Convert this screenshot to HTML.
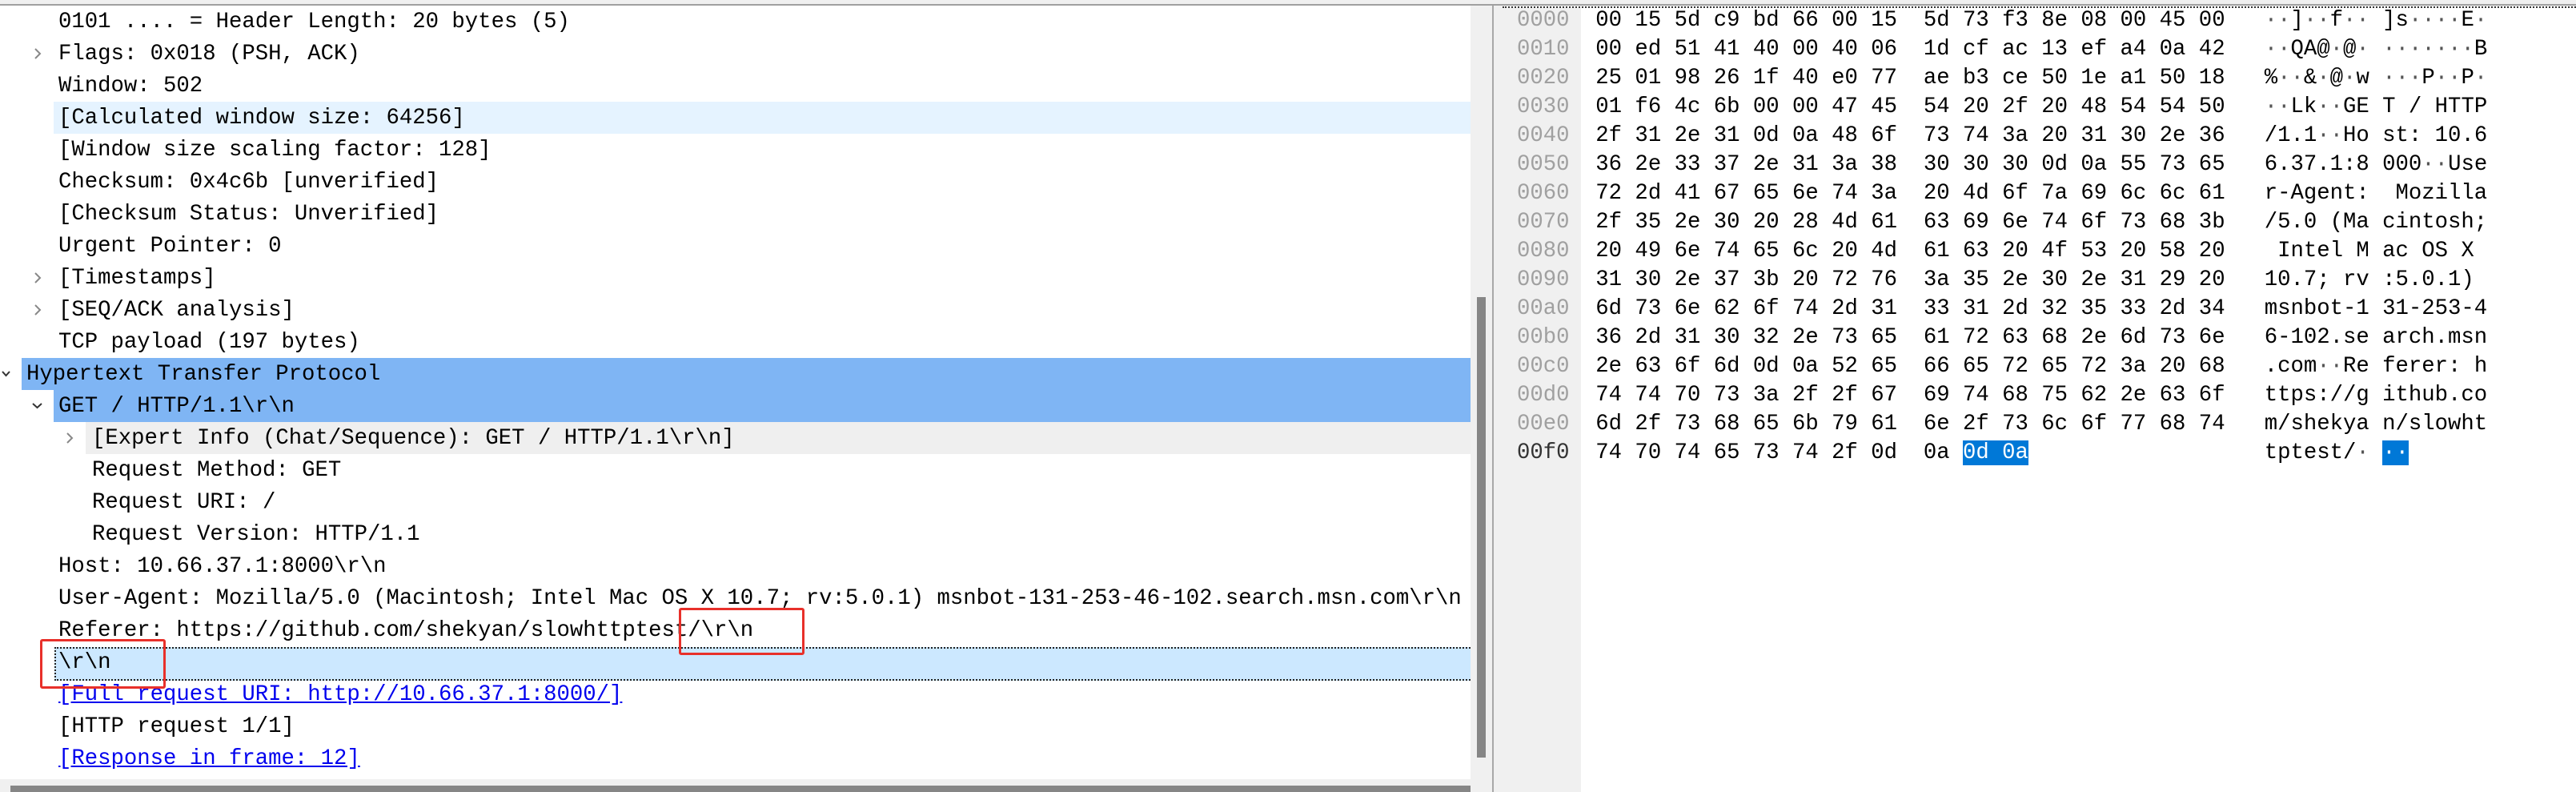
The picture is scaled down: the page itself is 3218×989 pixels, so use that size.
<!DOCTYPE html>
<html><head><meta charset="utf-8"><style>
html,body{margin:0;padding:0;}
body{width:3218px;height:989px;position:relative;overflow:hidden;background:#f0f0f0;font-family:"Liberation Mono",monospace;font-size:27.3px;color:#000;}
.topline{position:absolute;left:0;top:5px;width:3218px;height:2px;background:#a0a0a0;}
#left{position:absolute;left:0;top:7px;width:1837px;height:966px;background:#fff;overflow:hidden;}
.row{position:absolute;left:0;height:40px;line-height:40px;white-space:pre;}
.bg{position:absolute;right:0;height:40px;}
.t{position:absolute;top:0;white-space:pre;}
.lnk{color:#0000ee;text-decoration:underline;}
.chev{position:absolute;}
#vs{position:absolute;left:1845px;top:371px;width:11px;height:575px;background:#868686;}
#sep{position:absolute;left:1864px;top:7px;width:2px;height:982px;background:#a8a8a8;}
#hs{position:absolute;left:13px;top:981px;width:1824px;height:8px;background:#868686;}
#right{position:absolute;left:1877px;top:8px;width:1341px;height:981px;background:#fff;border-left:2px dotted #333;border-top:2px dotted #333;box-sizing:border-box;}
#offcol{position:absolute;left:1877px;top:10px;width:98px;height:979px;background:#f0f0f0;}
.hr{position:absolute;left:1895px;height:36px;line-height:36px;white-space:pre;}
.off{color:#a0a0a0;}
.d{color:#555;}
.sel{background:#0078d7;color:#fff;}
.red{position:absolute;border:3px solid #e8302a;box-sizing:border-box;border-radius:3px;}
</style></head><body>
<div class="topline"></div>
<div id="left">
  <!-- highlight backgrounds (coords relative to #left top=7) -->
  <div class="bg" style="left:67px;top:120px;background:#e5f3ff;"></div>
  <div class="bg" style="left:27px;top:440px;background:#7fb5f4;"></div>
  <div class="bg" style="left:67px;top:480px;background:#7fb5f4;"></div>
  <div class="bg" style="left:107px;top:520px;background:#efefef;"></div>
  <div class="bg" style="left:68px;top:801px;height:38px;background:#cce8ff;border-top:2px dotted #222;border-bottom:2px dotted #222;border-left:2px dotted #222;"></div>

  <div class="row" style="top:1px"><span class="t" style="left:73px">0101 .... = Header Length: 20 bytes (5)</span></div>
  <div class="row" style="top:41px"><span class="t" style="left:73px">Flags: 0x018 (PSH, ACK)</span></div>
  <div class="row" style="top:81px"><span class="t" style="left:73px">Window: 502</span></div>
  <div class="row" style="top:121px"><span class="t" style="left:73px">[Calculated window size: 64256]</span></div>
  <div class="row" style="top:161px"><span class="t" style="left:73px">[Window size scaling factor: 128]</span></div>
  <div class="row" style="top:201px"><span class="t" style="left:73px">Checksum: 0x4c6b [unverified]</span></div>
  <div class="row" style="top:241px"><span class="t" style="left:73px">[Checksum Status: Unverified]</span></div>
  <div class="row" style="top:281px"><span class="t" style="left:73px">Urgent Pointer: 0</span></div>
  <div class="row" style="top:321px"><span class="t" style="left:73px">[Timestamps]</span></div>
  <div class="row" style="top:361px"><span class="t" style="left:73px">[SEQ/ACK analysis]</span></div>
  <div class="row" style="top:401px"><span class="t" style="left:73px">TCP payload (197 bytes)</span></div>
  <div class="row" style="top:441px"><span class="t" style="left:33px">Hypertext Transfer Protocol</span></div>
  <div class="row" style="top:481px"><span class="t" style="left:73px">GET / HTTP/1.1\r\n</span></div>
  <div class="row" style="top:521px"><span class="t" style="left:115px">[Expert Info (Chat/Sequence): GET / HTTP/1.1\r\n]</span></div>
  <div class="row" style="top:561px"><span class="t" style="left:115px">Request Method: GET</span></div>
  <div class="row" style="top:601px"><span class="t" style="left:115px">Request URI: /</span></div>
  <div class="row" style="top:641px"><span class="t" style="left:115px">Request Version: HTTP/1.1</span></div>
  <div class="row" style="top:681px"><span class="t" style="left:73px">Host: 10.66.37.1:8000\r\n</span></div>
  <div class="row" style="top:721px"><span class="t" style="left:73px">User-Agent: Mozilla/5.0 (Macintosh; Intel Mac OS X 10.7; rv:5.0.1) msnbot-131-253-46-102.search.msn.com\r\n</span></div>
  <div class="row" style="top:761px"><span class="t" style="left:73px">Referer: https://github.com/shekyan/slowhttptest/\r\n</span></div>
  <div class="row" style="top:801px"><span class="t" style="left:73px">\r\n</span></div>
  <div class="row" style="top:841px"><span class="t lnk" style="left:73px">[Full request URI: http://10.66.37.1:8000/]</span></div>
  <div class="row" style="top:881px"><span class="t" style="left:73px">[HTTP request 1/1]</span></div>
  <div class="row" style="top:921px"><span class="t lnk" style="left:73px">[Response in frame: 12]</span></div>

  <svg class="chev" style="left:0;top:0" width="200" height="600">
    <g fill="none" stroke="#888" stroke-width="2">
      <polyline points="44,54 50,60 44,66"/>
      <polyline points="44,334 50,340 44,346"/>
      <polyline points="44,374 50,380 44,386"/>
      <polyline points="84,534 90,540 84,546"/>
    </g>
    <g fill="none" stroke="#333" stroke-width="2">
      <polyline points="3,457 7.5,462 12,457"/>
      <polyline points="41,497 46.5,502 52,497"/>
    </g>
  </svg>
</div>
<div id="vs"></div>
<div id="sep"></div>
<div id="hs"></div>
<div class="red" style="left:50px;top:798px;width:157px;height:62px;"></div>
<div class="red" style="left:848px;top:759px;width:157px;height:59px;"></div>

<div id="right"></div>
<div id="offcol"></div>
<div class="hr" style="top:8px"><span class="off">0000</span>  00 15 5d c9 bd 66 00 15  5d 73 f3 8e 08 00 45 00   <span class="d">··</span>]<span class="d">··</span>f<span class="d">··</span> ]s<span class="d">····</span>E<span class="d">·</span></div>
<div class="hr" style="top:44px"><span class="off">0010</span>  00 ed 51 41 40 00 40 06  1d cf ac 13 ef a4 0a 42   <span class="d">··</span>QA@<span class="d">·</span>@<span class="d">·</span> <span class="d">·······</span>B</div>
<div class="hr" style="top:80px"><span class="off">0020</span>  25 01 98 26 1f 40 e0 77  ae b3 ce 50 1e a1 50 18   %<span class="d">··</span>&amp;<span class="d">·</span>@<span class="d">·</span>w <span class="d">···</span>P<span class="d">··</span>P<span class="d">·</span></div>
<div class="hr" style="top:116px"><span class="off">0030</span>  01 f6 4c 6b 00 00 47 45  54 20 2f 20 48 54 54 50   <span class="d">··</span>Lk<span class="d">··</span>GE T / HTTP</div>
<div class="hr" style="top:152px"><span class="off">0040</span>  2f 31 2e 31 0d 0a 48 6f  73 74 3a 20 31 30 2e 36   /1.1<span class="d">··</span>Ho st: 10.6</div>
<div class="hr" style="top:188px"><span class="off">0050</span>  36 2e 33 37 2e 31 3a 38  30 30 30 0d 0a 55 73 65   6.37.1:8 000<span class="d">··</span>Use</div>
<div class="hr" style="top:224px"><span class="off">0060</span>  72 2d 41 67 65 6e 74 3a  20 4d 6f 7a 69 6c 6c 61   r-Agent:  Mozilla</div>
<div class="hr" style="top:260px"><span class="off">0070</span>  2f 35 2e 30 20 28 4d 61  63 69 6e 74 6f 73 68 3b   /5.0 (Ma cintosh;</div>
<div class="hr" style="top:296px"><span class="off">0080</span>  20 49 6e 74 65 6c 20 4d  61 63 20 4f 53 20 58 20    Intel M ac OS X </div>
<div class="hr" style="top:332px"><span class="off">0090</span>  31 30 2e 37 3b 20 72 76  3a 35 2e 30 2e 31 29 20   10.7; rv :5.0.1) </div>
<div class="hr" style="top:368px"><span class="off">00a0</span>  6d 73 6e 62 6f 74 2d 31  33 31 2d 32 35 33 2d 34   msnbot-1 31-253-4</div>
<div class="hr" style="top:404px"><span class="off">00b0</span>  36 2d 31 30 32 2e 73 65  61 72 63 68 2e 6d 73 6e   6-102.se arch.msn</div>
<div class="hr" style="top:440px"><span class="off">00c0</span>  2e 63 6f 6d 0d 0a 52 65  66 65 72 65 72 3a 20 68   .com<span class="d">··</span>Re ferer: h</div>
<div class="hr" style="top:476px"><span class="off">00d0</span>  74 74 70 73 3a 2f 2f 67  69 74 68 75 62 2e 63 6f   ttps://g ithub.co</div>
<div class="hr" style="top:512px"><span class="off">00e0</span>  6d 2f 73 68 65 6b 79 61  6e 2f 73 6c 6f 77 68 74   m/shekya n/slowht</div>
<div class="hr" style="top:548px"><span style="color:#333">00f0</span>  74 70 74 65 73 74 2f 0d  0a <span class="sel">0d 0a</span>                  tptest/<span class="d">·</span> <span class="sel">··</span></div>
</body></html>
